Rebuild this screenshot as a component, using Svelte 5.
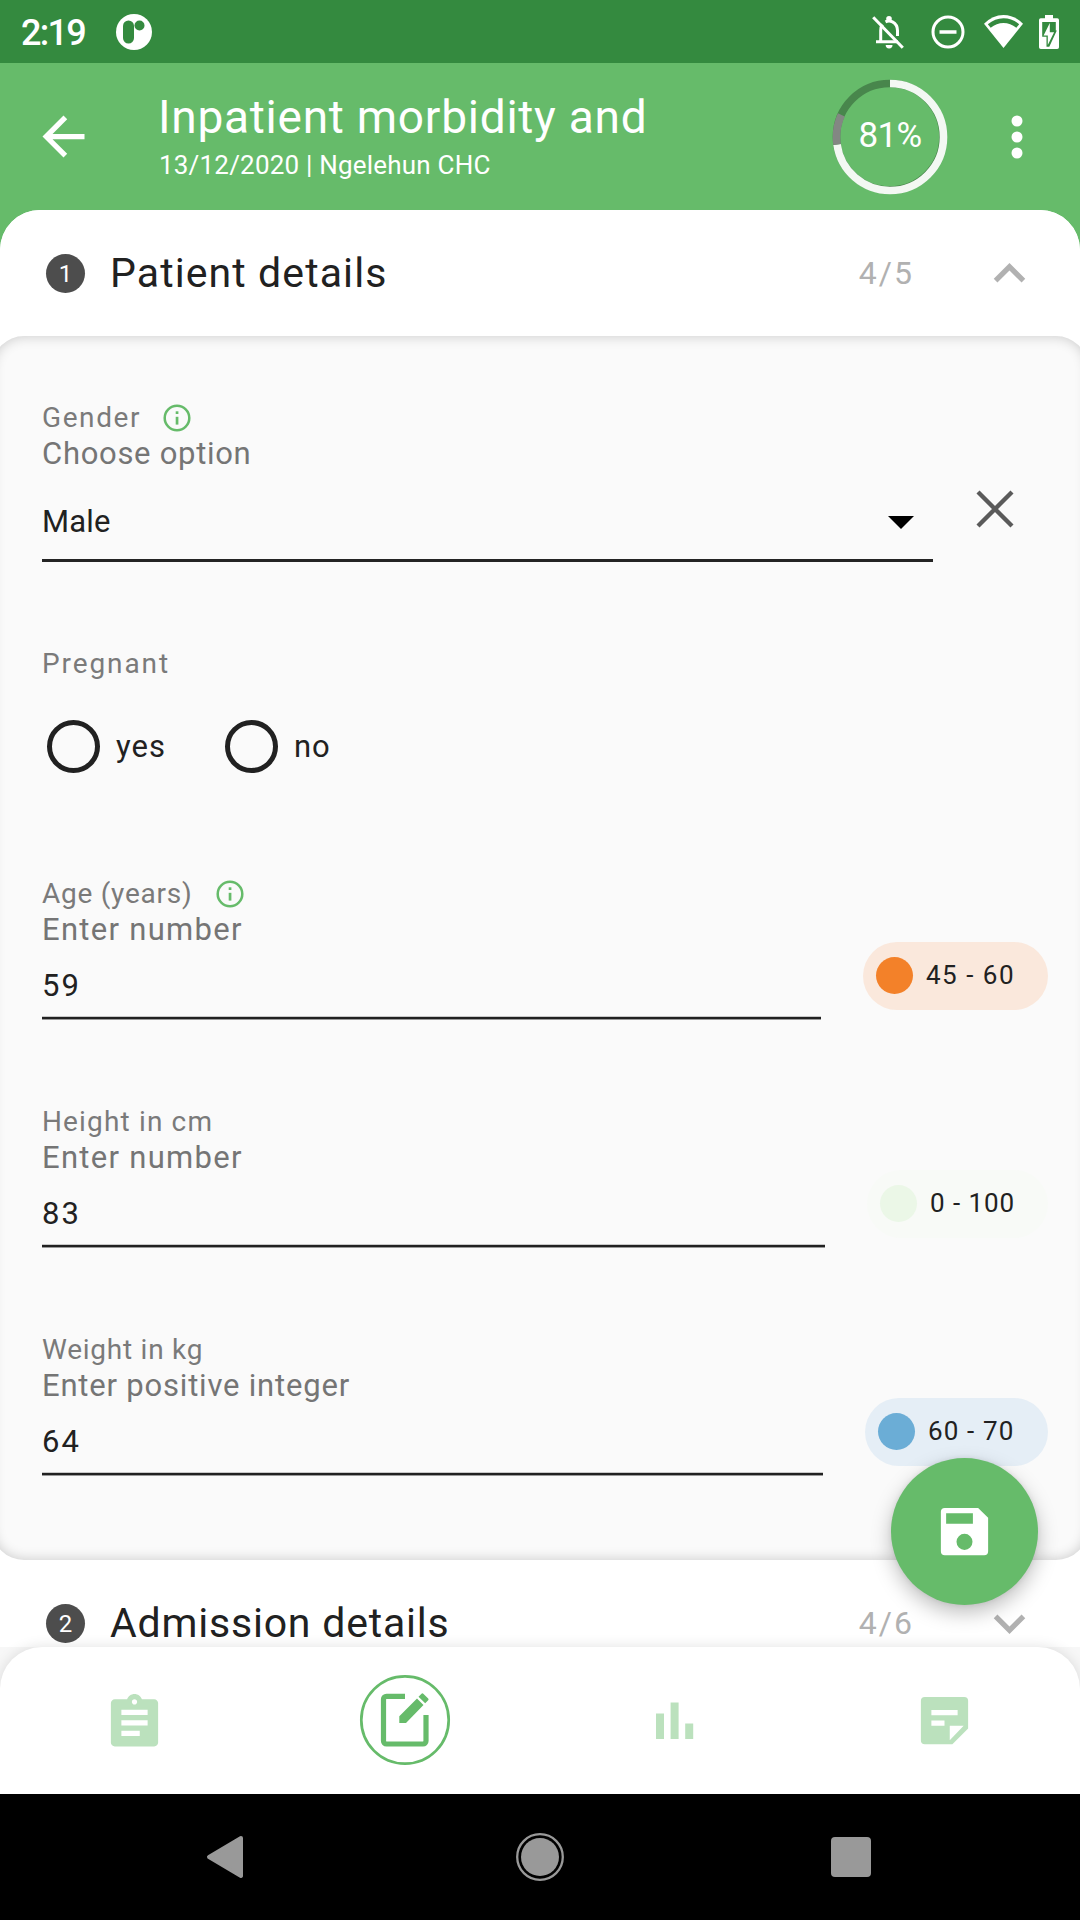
<script>
  const gaps = { done: 72.73, pending: 9.09 };
  const measures = [
    { id: 'age', label: 'Age (years)', info: true, hint: 'Enter number', value: '59', range: '45 - 60' },
    { id: 'height', label: 'Height in cm', info: false, hint: 'Enter number', value: '83', range: '0 - 100' },
    { id: 'weight', label: 'Weight in kg', info: false, hint: 'Enter positive integer', value: '64', range: '60 - 70' }
  ];
</script>

{#snippet infoIcon()}
  <svg class="info" viewBox="0 0 28 28">
    <circle cx="14" cy="14" r="12.3" fill="none" stroke="#66bb6a" stroke-width="2.5" />
    <rect x="12.700" y="12.800" width="2.700" height="7.800" fill="#66bb6a" />
    <rect x="12.700" y="7.300" width="2.700" height="2.700" fill="#66bb6a" />
  </svg>
{/snippet}

{#snippet sectionHead(number, title, count, open)}
  <header class="section-head">
    <span class="badge">{number}</span>
    <h2 class:first={open}>{title}</h2>
    <span class="count">{count}</span>
    <svg class="chevron" viewBox="0 0 24 24">
      {#if open}
        <path d="M12 8l-6 6 1.41 1.41L12 10.83l4.59 4.58L18 14z" />
      {:else}
        <path d="M16.59 8.59L12 13.17 7.41 8.59 6 10l6 6 6-6z" />
      {/if}
    </svg>
  </header>
{/snippet}

<div class="screen">
  <div class="status">
    <span class="time">2:19</span>
    <svg class="logo" viewBox="0 0 36 36">
      <circle cx="18" cy="18" r="18" fill="#fff" />
      <rect x="7" y="6.5" width="11" height="23" rx="5.5" fill="#348a3f" />
      <circle cx="23.5" cy="11.5" r="5" fill="#348a3f" />
    </svg>
    <svg class="bell" viewBox="0 0 32 34">
      <path d="M8.700 28V15.500Q8.700 12 10.500 9.500M13.500 6.800Q17 5 20.500 6.800Q25.500 9.500 25.500 15.500V21M4 26.700H26" fill="none" stroke="#fff" stroke-width="3" />
      <circle cx="17" cy="3.800" r="2.800" fill="#fff" />
      <path d="M13.700 30h6.800a3.400 3.400 0 0 1-6.800 0z" fill="#fff" />
      <path d="M1.200 2.200L30.800 32.800" stroke="#fff" stroke-width="3" />
    </svg>
    <svg class="dnd" viewBox="0 0 34 34">
      <circle cx="17" cy="17" r="15" fill="none" stroke="#fff" stroke-width="3" />
      <path d="M8.500 17h17" stroke="#fff" stroke-width="3.500" />
    </svg>
    <svg class="wifi" viewBox="0 0 39 33">
      <path d="M19.500 33L0 8.800Q8.500 0 19.500 0T39 8.800z" fill="#fff" />
      <path d="M3.800 9.300Q11 3.300 19.500 3.300T35.200 9.300L32.300 12.800Q26.500 8 19.500 8T6.700 12.800z" fill="#348a3f" />
    </svg>
    <svg class="battery" viewBox="0 0 20 34">
      <path d="M6 0h8v3.300h4.200a1.800 1.800 0 0 1 1.800 1.800v27.100a1.800 1.800 0 0 1-1.800 1.800H1.800A1.800 1.800 0 0 1 0 32.200V5.100a1.800 1.800 0 0 1 1.800-1.800H6z" fill="#fff" />
      <path d="M3.200 7h13.600v8.500h1l-7.500 16.300H7.500v-10H3.200z" fill="#348a3f" />
      <path d="M10.800 8v9.300h4.300L8.800 30v-9.500H4.600z" fill="#fff" />
    </svg>
  </div>

  <div class="appbar">
    <svg class="back" viewBox="0 0 24 24"><path d="M20 11H7.830l5.590-5.590L12 4l-8 8 8 8 1.410-1.410L7.830 13H20z" fill="#fff" /></svg>
    <div class="titles">
      <h1>Inpatient morbidity and</h1>
      <p>13/12/2020 | Ngelehun CHC</p>
    </div>
    <div class="progress">
      <svg viewBox="0 0 116 116">
        <circle class="track" cx="57.700" cy="57.700" r="53.200" />
        <g transform="rotate(-90 58 58)">
          <circle class="done" cx="58" cy="58" r="53.500" pathLength="100" stroke-dasharray="{gaps.done} 100" />
          <circle class="pending" cx="58" cy="58" r="53.500" pathLength="100" stroke-dasharray="{gaps.pending} 100" stroke-dashoffset={-gaps.done} />
        </g>
      </svg>
      <span>81%</span>
    </div>
    <svg class="more" viewBox="0 0 12 44">
      <circle cx="6" cy="6" r="5.500" /><circle cx="6" cy="22" r="5.500" /><circle cx="6" cy="38" r="5.500" />
    </svg>
  </div>

  <main>
    <div class="sheet">
      {@render sectionHead(1, 'Patient details', '4/5', true)}
      <section class="panel">
        <div class="field gender">
          <div class="entry">
            <div class="label"><span>Gender</span>{@render infoIcon()}</div>
            <div class="hint">Choose option</div>
            <div class="value">
              <span>Male</span>
              <svg class="caret" viewBox="0 0 26 13"><path d="M0 0h26L13 13z" /></svg>
            </div>
          </div>
          <svg class="clear" viewBox="0 0 38 38"><path d="M2 2l34 34M36 2L2 36" stroke="#5a5a5a" stroke-width="4.300" /></svg>
        </div>

        <div class="field pregnant">
          <div class="entry">
            <div class="label"><span>Pregnant</span></div>
            <div class="options">
              <span class="radio"></span><span class="yes">yes</span>
              <span class="radio"></span><span class="no">no</span>
            </div>
          </div>
        </div>

        {#each measures as m}
          <div class="field measure {m.id}">
            <div class="entry">
              <div class="label"><span>{m.label}</span>{#if m.info}{@render infoIcon()}{/if}</div>
              <div class="hint">{m.hint}</div>
              <div class="value"><span>{m.value}</span></div>
            </div>
            <div class="legend"><i></i><span>{m.range}</span></div>
          </div>
        {/each}
      </section>
      {@render sectionHead(2, 'Admission details', '4/6', false)}
    </div>
  </main>

  <nav class="tabs">
    <div class="tabs-inner">
      <div class="tab">
        <svg viewBox="0 0 63 63" class="icon"><path transform="translate(0 2.400) scale(2.625)" fill="#bbe1bd" d="M19.500 3h-4.680C14.400 1.840 13.300 1 12 1s-2.400.84-2.820 2H4.500C3.700 3 3 3.700 3 4.500v15c0 .8.700 1.500 1.500 1.500h15c.8 0 1.500-.7 1.500-1.500v-15c0-.8-.7-1.500-1.500-1.500zM12 3c.55 0 1 .45 1 1s-.45 1-1 1-1-.45-1-1 .45-1 1-1zm2 14H7v-2h7v2zm3-4H7v-2h10v2zm0-4H7V7h10v2z" /></svg>
      </div>
      <div class="tab">
        <svg viewBox="0 0 92 92" class="ring">
          <circle cx="46" cy="46" r="43.700" fill="none" stroke="#66bb6a" stroke-width="2.700" />
          <path d="M46 22.300H27.500a3 3 0 0 0-3 3V67a3 3 0 0 0 3 3h36.500a3 3 0 0 0 3-3V41" fill="none" stroke="#66bb6a" stroke-width="5.200" />
          <path d="M40.300 49v-6.800l17.700-17.700 6.500 6.500L47 49zM59.500 22.700l3-3q.9-.8 1.800 0l4.900 4.800q.8.900 0 1.800l-3 3z" fill="#66bb6a" />
        </svg>
      </div>
      <div class="tab">
        <svg viewBox="0 0 38 38" class="bars"><path d="M0 11.500h8V37H0zM14.600.500h8V37h-8zM29.200 21.500h8V37h-8z" fill="#bbe1bd" /></svg>
      </div>
      <div class="tab">
        <svg viewBox="0 0 63 63" class="icon"><path transform="scale(2.625)" fill="#bbe1bd" fill-rule="evenodd" d="M4.500 3h15A1.500 1.500 0 0 1 21 4.500V15l-6 6H4.500A1.500 1.500 0 0 1 3 19.500v-15A1.500 1.500 0 0 1 4.500 3zM7 8v2h10V8zM7 12v2h5v-2zM14 14v5.500l5.300-5.500z" /></svg>
      </div>
    </div>
  </nav>

  <div class="system">
    <svg viewBox="0 0 38 44" class="sys-back"><path d="M35 3L3 22l32 19z" fill="#999" stroke="#999" stroke-width="4" stroke-linejoin="round" /></svg>
    <svg viewBox="0 0 50 50" class="sys-home"><circle cx="25" cy="25" r="19" fill="#999" /><circle cx="25" cy="25" r="22.800" fill="none" stroke="#999" stroke-width="2.300" /></svg>
    <span class="sys-recent"></span>
  </div>

  <button class="fab" aria-label="Save">
    <svg viewBox="0 0 24 24"><path fill="#fff" fill-rule="evenodd" d="M17.200 3H4.500A1.500 1.500 0 0 0 3 4.500v15A1.500 1.500 0 0 0 4.500 21h15a1.500 1.500 0 0 0 1.500-1.500V6.800zM12 19a3 3 0 1 1 0-6.100A3 3 0 0 1 12 19zM15.200 9H5V5h10.200z" /></svg>
  </button>
</div>

<style>
  :global(body) { margin: 0; background: #000; }
  .screen, .screen * { box-sizing: border-box; }
  .screen {
    position: relative;
    width: 1080px;
    height: 1920px;
    display: flex;
    flex-direction: column;
    overflow: hidden;
    background: #66bb6a;
    font-family: Roboto, "Liberation Sans", sans-serif;
    color: #212121;
  }
  svg { display: block; flex: none; }
  h1, h2, p { margin: 0; font-weight: 400; white-space: nowrap; }

  .status {
    height: 63px;
    flex: none;
    display: flex;
    align-items: center;
    background: #348a3f;
    padding: 0 21px 0 21px;
    color: #fff;
  }
  .time { width: 95px; font-size: 36px; font-weight: 500; line-height: 63px; margin-top: 4px; letter-spacing: -1.7px; white-space: nowrap; }
  .logo { width: 36px; height: 36px; }
  .bell { width: 32px; height: 34px; margin-left: auto; }
  .dnd { width: 34px; height: 34px; margin-left: 27px; }
  .wifi { width: 39px; height: 33px; margin-left: 19px; }
  .battery { width: 20px; height: 34px; margin-left: 16px; }

  .appbar {
    height: 147px;
    flex: none;
    display: flex;
    align-items: center;
    padding: 0 57px 0 32px;
    color: #fff;
  }
  .back { width: 63px; height: 63px; }
  .titles { margin-left: 64px; flex: 1; margin-top: -1px; }
  h1 { font-size: 46px; line-height: 58px; letter-spacing: 0.75px; margin-left: -1px; }
  .titles p { font-size: 26px; line-height: 38px; letter-spacing: 0.2px; }
  .progress { width: 116px; height: 116px; display: grid; place-items: center; margin-right: 63px; }
  .progress svg, .progress span { grid-area: 1 / 1; }
  .progress svg { width: 116px; height: 116px; }
  .progress circle { fill: none; stroke-width: 7.6; }
  .progress .track { stroke: #48864c; }
  .progress .done { stroke: #f3f8f3; }
  .progress .pending { stroke: #838783; }
  .progress span { font-size: 35px; line-height: 40px; letter-spacing: -0.6px; margin-top: -1px; }
  .more { width: 12px; height: 44px; fill: #fff; }

  main { height: 1437px; flex: none; overflow: hidden; }
  .sheet { background: #fff; border-radius: 40px 40px 0 0; overflow: hidden; }
  .section-head {
    height: 126px;
    display: flex;
    align-items: center;
    background: #fff;
    padding: 0 39px 0 46px;
  }
  .badge {
    width: 39px; height: 39px; border-radius: 50%;
    background: #4d4d4d; color: #fff;
    font-size: 24px; line-height: 40px; text-align: center;
  }
  h2 { margin-left: 25px; flex: 1; font-size: 41px; line-height: 50px; letter-spacing: 0.8px; }
  h2.first { letter-spacing: 1.1px; margin-left: 25px; }
  .count { font-size: 32px; letter-spacing: 2px; color: #b1b1b1; margin-right: 64px; }
  .chevron { width: 63px; height: 63px; fill: #b1b1b1; }

  .panel {
    height: 1224px;
    margin: 0 -8px;
    padding: 64px 40px 0 50px;
    background: #fafafa;
    border-radius: 32px;
    box-shadow: inset 0 0 13px rgba(0, 0, 0, 0.2);
  }
  .field { display: flex; height: 228px; }
  .entry { flex: 1; min-width: 0; }
  .label { height: 36px; display: flex; align-items: center; font-size: 28px; line-height: 36px; letter-spacing: 1.15px; color: #7a7a7a; white-space: nowrap; }
  .hint { height: 36px; font-size: 31px; line-height: 36px; letter-spacing: 1.3px; color: #757575; white-space: nowrap; }
  .info { width: 28px; height: 28px; margin-left: 22px; }
  .value {
    display: flex; align-items: center; justify-content: space-between;
    height: 73px; font-size: 31px; letter-spacing: 0.2px; color: #212121;
  }
  .gender { height: 246px; }
  .gender .label { letter-spacing: 1.6px; }
  .gender .hint { letter-spacing: 0.7px; }
  .gender .value { height: 90px; padding: 12px 19px 0 0; border-bottom: 3px solid #242424; }
  .gender .entry { flex: 0 0 891px; }
  .caret { width: 26px; height: 13px; margin-top: 2px; }
  .clear { width: 38px; height: 38px; margin: 90px 0 0 43px; }

  .pregnant { height: 230px; }
  .pregnant .label { letter-spacing: 1.9px; }
  .options { display: flex; align-items: center; height: 52px; margin-top: 38px; padding-left: 5px; font-size: 31px; letter-spacing: 1px; }
  .radio { width: 53px; height: 53px; border: 5.5px solid #212121; border-radius: 50%; }
  .yes { width: 109px; margin-left: 16px; }
  .no { margin-left: 16px; }

  .measure .value { height: 72px; padding-top: 2px; background: linear-gradient(#c8c8c8 1px, #212121 1px 3px, #999 3px) left bottom / 100% 4px no-repeat; letter-spacing: 2.2px; }
  .age .label { letter-spacing: 0.75px; }
  .age .info { margin-left: 24px; }
  .weight .label { letter-spacing: 0.75px; }
  .weight .hint { letter-spacing: 0.8px; }
  .legend {
    display: flex; align-items: center;
    width: 185px; height: 68px;
    margin: 66px 0 0 42px; padding-left: 13px;
    border-radius: 34px;
    font-size: 26px; letter-spacing: 1.15px; white-space: nowrap;
    background: #fae8dc;
  }
  .legend i { width: 37px; height: 37px; border-radius: 50%; margin: -2px 13px 0 0; background: #f38129; }
  .legend span { margin-top: -2px; }
  .age .legend { letter-spacing: 1.5px; }
  .height .legend { width: 181px; background: #f8faf7; letter-spacing: 0.95px; }
  .height .legend i { background: #ebf7e7; }
  .weight .legend { width: 183px; background: #e5eef6; }
  .weight .legend i { background: #6badd6; }

  .tabs { position: relative; height: 147px; flex: none; background: #f7f7f7; }
  .tabs-inner {
    height: 147px; display: grid; grid-template-columns: repeat(4, 1fr);
    background: #fff; border-radius: 42px 42px 0 0;
    box-shadow: 0 0 14px rgba(0, 0, 0, 0.12);
  }
  .tab { display: grid; place-items: center; }
  .icon { width: 63px; height: 63px; margin-right: 2px; }
  .ring { width: 92px; height: 92px; margin-bottom: 1px; }
  .bars { width: 38px; height: 38px; }

  .system { position: relative; height: 126px; flex: none; background: #000; display: flex; align-items: center; padding: 0 209px 0 206px; justify-content: space-between; }
  .sys-back { width: 38px; height: 44px; }
  .sys-home { width: 50px; height: 50px; margin-left: 4px; }
  .sys-recent { width: 40px; height: 40px; border-radius: 4px; background: #999; }

  .fab {
    position: absolute; left: 891px; top: 1458px;
    width: 147px; height: 147px; padding: 0;
    border: 0; border-radius: 50%;
    display: grid; place-items: center;
    background: #66bb6a;
    box-shadow: 0 8px 20px rgba(0, 0, 0, 0.25), 0 0 5px rgba(0, 0, 0, 0.08);
  }
  .fab svg { width: 63px; height: 63px; }
</style>
